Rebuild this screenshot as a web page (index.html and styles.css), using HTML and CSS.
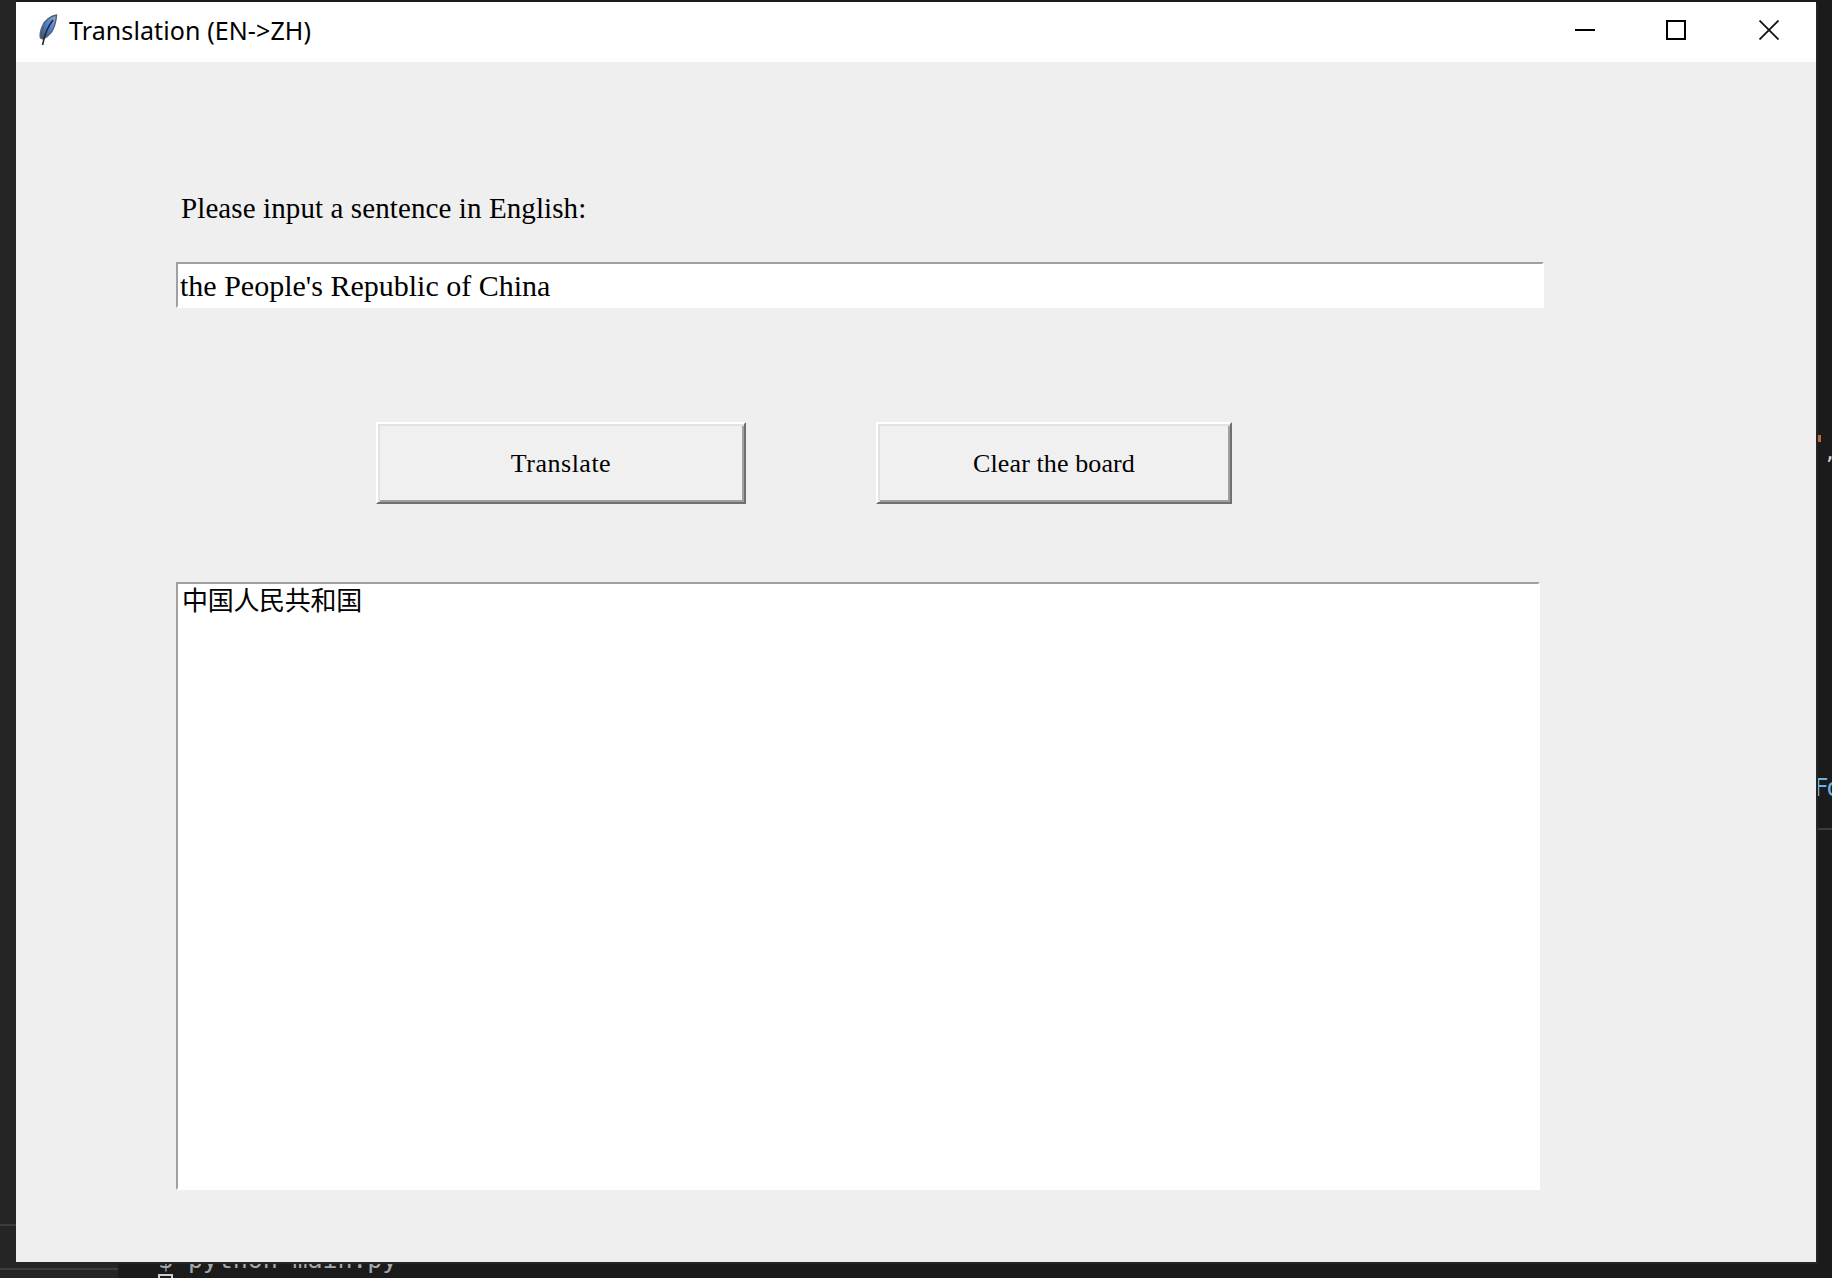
FILE: index.html
```html
<!DOCTYPE html>
<html lang="en">
<head>
<meta charset="utf-8">
<title>Translation (EN-&gt;ZH)</title>
<link rel="stylesheet" href="styles.css">
</head>
<body>
<div class="desktop">
  <div class="bg-sidebar"></div>
  <div class="bg-line bg-line-a"></div>
  <div class="bg-line bg-line-b"></div>
  <div class="bg-line bg-line-c"></div>
  <div class="bg-term">$ python main.py</div>
  <div class="bg-cursor"></div>
  <div class="bg-tick"></div>
  <div class="bg-glyph">,</div>
  <div class="bg-fo">Fo</div>
  <div class="window">
    <header class="titlebar">
      <svg class="feather" viewBox="0 0 20 32" width="20" height="32" aria-hidden="true">
        <defs>
          <linearGradient id="fg" x1="0" y1="1" x2="1" y2="0">
            <stop offset="0" stop-color="#3a4a63"/>
            <stop offset="0.55" stop-color="#4f86d6"/>
            <stop offset="1" stop-color="#8fb1dc"/>
          </linearGradient>
        </defs>
        <path d="M18.5 1 C13 2 7 6 4.5 12 C2.5 16.5 1.5 20 2.5 24 L5 25 C9 23 14 19 16 13 C17.5 8.5 18.5 5 18.5 1 Z" fill="url(#fg)" stroke="#56606e" stroke-width="1.4"/>
        <path d="M15 6 C10 12 7 18 4.6 31" fill="none" stroke="#23272e" stroke-width="1.6"/>
      </svg>
      <span class="title">Translation (EN-&gt;ZH)</span>
      <div class="controls">
        <svg class="ctl" viewBox="0 0 20 20" width="20" height="20" aria-hidden="true"><path d="M0 9h20v2H0z" fill="#000"/></svg>
        <svg class="ctl ctl-max" viewBox="0 0 20 20" width="20" height="20" aria-hidden="true"><path d="M1 1h18v18H1z" fill="none" stroke="#000" stroke-width="2"/></svg>
        <svg class="ctl" viewBox="0 0 20 20" width="20" height="20" aria-hidden="true"><path d="M.5.5l19 19M19.5.5l-19 19" fill="none" stroke="#111" stroke-width="1.8"/></svg>
      </div>
    </header>
    <main class="content">
      <label class="prompt">Please input a sentence in English:</label>
      <div class="entry">the People's Republic of China</div>
      <div class="actions">
        <button class="btn btn-translate" type="button">Translate</button>
        <button class="btn btn-clear" type="button">Clear the board</button>
      </div>
      <div class="output">中国人民共和国</div>
    </main>
  </div>
</div>
</body>
</html>
```
FILE: styles.css
```css
* { box-sizing: border-box; }
html, body { margin: 0; height: 100%; }
body { background: #1b1b1b; overflow: hidden; }

.desktop {
  position: relative;
  width: 1832px;
  height: 1278px;
  overflow: hidden;
  padding: 2px 16px 16px;
}

.bg-sidebar { position: absolute; left: 0; top: 0; width: 16px; height: 1278px; background: #252525; }
.bg-sidebar::after { content: ""; position: absolute; left: 0; top: 1262px; width: 118px; height: 16px; background: #252525; }
.bg-line { position: absolute; background: #3c3c3c; height: 2px; }
.bg-line-a { left: 0; top: 1224px; width: 16px; }
.bg-line-b { left: 0; top: 1268px; width: 118px; }
.bg-line-c { left: 1816px; top: 828px; width: 16px; }
.bg-term {
  position: absolute; left: 158px; top: 1245px;
  font: 25px/30px "DejaVu Sans Mono", monospace; color: #a8a8a8; letter-spacing: -.1px;
}
.bg-cursor { position: absolute; left: 158px; top: 1274px; width: 15px; height: 12px; border: 2px solid #cfcfcf; }
.bg-tick { position: absolute; left: 1818px; top: 435px; width: 3px; height: 7px; background: #b86a3a; }
.bg-glyph { position: absolute; left: 1824px; top: 440px; font: 20px/24px "DejaVu Sans Mono", monospace; color: #c8d8e8; }
.bg-fo { position: absolute; left: 1814px; top: 773px; font: 24px/30px "DejaVu Sans Mono", monospace; letter-spacing: -2px; color: #6cb6e6; }

.window {
  position: relative;
  display: flex;
  flex-direction: column;
  width: 1800px;
  height: 1260px;
  background: #efefef;
  box-shadow: 2px 2px 0 #252525;
}

.titlebar {
  display: flex;
  align-items: center;
  height: 60px;
  flex: none;
  background: #fff;
  padding: 0 0 4px 22px;
}
.feather { flex: none; margin-right: 11px; }
.title {
  font: 25px/32px "Noto Sans", sans-serif;
  color: #000;
  letter-spacing: .1px;
}
.controls { margin-left: auto; display: flex; gap: 72px; padding-right: 37px; align-items: center; }
.ctl { display: block; }
.ctl-max { transform: translateX(-1px); }

.content {
  display: flex;
  flex-direction: column;
  align-items: flex-start;
  padding: 128px 0 0 160px;
  font-family: "Liberation Serif", "Times New Roman", serif;
  color: #000;
}

.prompt {
  margin-left: 5px;
  font-size: 29px;
  line-height: 36px;
  letter-spacing: .1px;
}

.entry {
  margin-top: 36px;
  width: 1368px;
  height: 46px;
  background: #fff;
  border-top: 2px solid #a0a0a0;
  border-left: 2px solid #a0a0a0;
  border-right: 2px solid #fff;
  border-bottom: 2px solid #fff;
  padding-left: 2px;
  font-size: 30px;
  line-height: 44px;
}

.actions {
  display: flex;
  margin-top: 114px;
  margin-left: 200px;
  gap: 130px;
}
.btn {
  height: 82px;
  background: #f0f0f0;
  border: 2px solid;
  border-color: #fff #707070 #707070 #fff;
  box-shadow: inset 2px 2px 0 #e2e2e2, inset -2px -2px 0 #a0a0a0;
  font-family: "Liberation Serif", "Times New Roman", serif;
  font-size: 26px;
  color: #000;
  padding: 2px 0 0;
}
.btn-translate { width: 370px; letter-spacing: .5px; }
.btn-clear { width: 356px; letter-spacing: .1px; }

.output {
  margin-top: 78px;
  width: 1364px;
  height: 608px;
  background: #fff;
  border-top: 2px solid #a0a0a0;
  border-left: 2px solid #a0a0a0;
  border-right: 2px solid #fff;
  border-bottom: 2px solid #fff;
  padding-left: 4px;
  font-family: "Noto Sans CJK SC", sans-serif;
  font-size: 26px;
  line-height: 30px;
  letter-spacing: -.3px;
}
```
